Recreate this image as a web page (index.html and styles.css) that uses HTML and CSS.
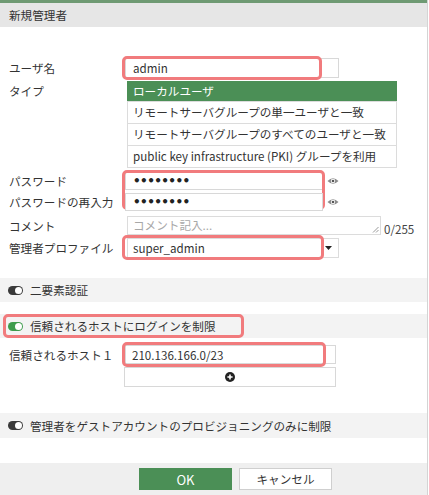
FILE: index.html
```html
<!DOCTYPE html>
<html lang="ja">
<head>
    <meta charset="UTF-8">
    <meta name="viewport" content="width=device-width, initial-scale=1.0">
    <title>新規管理者</title>
    <link rel="stylesheet" href="styles.css">
</head>
<body>
    <div class="dialog">
        <div class="titlebar">新規管理者</div>

        <div class="form">
            <div class="row row-user">
                <div class="label">ユーザ名</div>
                <div class="field">
                    <div class="input input-user">admin</div>
                    <span class="mark mark-user"></span>
                </div>
            </div>

            <div class="row row-type">
                <div class="label">タイプ</div>
                <ul class="type-list">
                    <li class="selected">ローカルユーザ</li>
                    <li>リモートサーバグループの単一ユーザと一致</li>
                    <li>リモートサーバグループのすべてのユーザと一致</li>
                    <li>public key infrastructure (PKI) グループを利用</li>
                </ul>
            </div>

            <div class="row row-pass">
                <div class="label">パスワード</div>
                <div class="field">
                    <div class="input input-pass"><span class="dots">••••••••</span></div>
                    <svg class="eye" width="12" height="8" viewBox="0 0 12 8">
                        <path d="M0.5 4 Q6 -1.5 11.5 4 Q6 9.5 0.5 4Z" fill="#8a8a8a"/>
                        <circle cx="6" cy="4" r="2.2" fill="#fff"/>
                        <circle cx="6" cy="4" r="1.3" fill="#555"/>
                    </svg>
                    <span class="mark mark-pass"></span>
                </div>
            </div>

            <div class="row row-pass2">
                <div class="label">パスワードの再入力</div>
                <div class="field">
                    <div class="input input-pass"><span class="dots">••••••••</span></div>
                    <svg class="eye" width="12" height="8" viewBox="0 0 12 8">
                        <path d="M0.5 4 Q6 -1.5 11.5 4 Q6 9.5 0.5 4Z" fill="#8a8a8a"/>
                        <circle cx="6" cy="4" r="2.2" fill="#fff"/>
                        <circle cx="6" cy="4" r="1.3" fill="#555"/>
                    </svg>
                </div>
            </div>

            <div class="row row-comment">
                <div class="label">コメント</div>
                <div class="field">
                    <div class="textarea">
                        <span class="placeholder">コメント記入...</span>
                        <svg class="grip" width="7" height="7" viewBox="0 0 7 7">
                            <path d="M1 6.5 L6.5 1 M4 6.5 L6.5 4" stroke="#999" stroke-width="1"/>
                        </svg>
                    </div>
                    <span class="counter">0/255</span>
                </div>
            </div>

            <div class="row row-profile">
                <div class="label">管理者プロファイル</div>
                <div class="field">
                    <div class="select">
                        <span>super_admin</span>
                        <svg class="caret" width="7" height="4" viewBox="0 0 7 4">
                            <path d="M0 0 L7 0 L3.5 4Z" fill="#222"/>
                        </svg>
                    </div>
                    <span class="mark mark-profile"></span>
                </div>
            </div>
        </div>

        <div class="section section-2fa">
            <span class="toggle"></span>
            <span>二要素認証</span>
        </div>

        <div class="section section-trusted">
            <span class="toggle on"></span>
            <span>信頼されるホストにログインを制限</span>
            <span class="mark mark-trusted"></span>
        </div>

        <div class="form form-hosts">
            <div class="row row-host">
                <div class="label">信頼されるホスト１</div>
                <div class="field">
                    <div class="input input-host">210.136.166.0/23</div>
                    <span class="mark mark-host"></span>
                </div>
            </div>
            <div class="row row-add">
                <div class="label"></div>
                <div class="add-box">
                    <svg width="10" height="10" viewBox="0 0 10 10">
                        <circle cx="5" cy="5" r="5" fill="#222"/>
                        <path d="M5 2.4 V7.6 M2.4 5 H7.6" stroke="#fff" stroke-width="1.6"/>
                    </svg>
                </div>
            </div>
        </div>

        <div class="section section-guest">
            <span class="toggle"></span>
            <span>管理者をゲストアカウントのプロビジョニングのみに制限</span>
        </div>

        <div class="footer">
            <button class="btn btn-ok">OK</button>
            <button class="btn btn-cancel">キャンセル</button>
        </div>
    </div>
</body>
</html>
```

FILE: styles.css
```css
body {
    margin: 0;
    font-family: "Noto Sans CJK JP", "Noto Sans", sans-serif;
    font-size: 11.6px;
    color: #333;
    background: #fff;
}

.dialog {
    width: 427px;
    height: 495px;
    border-right: 1px solid #d4d4d4;
    display: flex;
    flex-direction: column;
    overflow: hidden;
}

.titlebar {
    border-top: 3px solid #6f9a73;
    background: #e6e6e6;
    height: 24px;
    line-height: 24px;
    padding-left: 9px;
}

.form {
    padding: 31px 0 0 9px;
}

.row {
    display: flex;
    align-items: center;
}

.label {
    width: 116px;
    flex: none;
    white-space: nowrap;
}

.field {
    position: relative;
    display: flex;
    align-items: center;
}

.input {
    box-sizing: border-box;
    border: 1px solid #d8d8d8;
    padding-left: 7px;
    display: flex;
    align-items: center;
    background: #fff;
}

.mark {
    position: absolute;
    box-sizing: border-box;
    border: 3px solid #f17b7d;
    border-radius: 5px;
    pointer-events: none;
}

/* ユーザ名 */
.input-user {
    width: 214px;
    height: 20px;
}

.mark-user {
    left: -3px;
    top: -2px;
    width: 200px;
    height: 24px;
}

/* タイプ */
.row-type {
    margin-top: 3px;
    align-items: flex-start;
}

.row-type .label {
    line-height: 20px;
}

.type-list {
    list-style: none;
    margin: 0 0 0 2px;
    padding: 0;
    width: 270px;
    box-sizing: border-box;
    border: 1px solid #dcdcdc;
    border-top: none;
}

.type-list li {
    height: 21px;
    line-height: 21px;
    padding-left: 5px;
    border-top: 1px solid #dcdcdc;
    white-space: nowrap;
}

.type-list li.selected {
    height: 20px;
    line-height: 20px;
    border-top: none;
    margin: 0 -1px;
    padding-left: 6px;
    background: #4b8f56;
    color: #fff;
}

/* パスワード */
.row-pass {
    margin-top: 4px;
}

.row-pass2 {
    margin-top: 3px;
}

.input-pass {
    width: 198px;
    height: 18px;
}

.dots {
    font-family: "DejaVu Sans", sans-serif;
    font-size: 12px;
    font-weight: bold;
    letter-spacing: -0.6px;
    color: #222;
    line-height: 1;
}

.eye {
    margin-left: 4px;
}

.mark-pass {
    left: -3px;
    top: -2px;
    width: 203px;
    height: 40px;
}

/* コメント */
.row-comment {
    margin-top: 5px;
}

.textarea {
    position: relative;
    box-sizing: border-box;
    width: 254px;
    height: 19px;
    margin-left: 2px;
    border: 1px solid #dcdcdc;
    padding-left: 5px;
    line-height: 17px;
}

.placeholder {
    color: #a8a8a8;
}

.grip {
    position: absolute;
    right: 1px;
    bottom: 1px;
}

.counter {
    align-self: flex-end;
    margin-left: 3px;
    line-height: 12px;
    color: #444;
}

/* 管理者プロファイル */
.row-profile {
    margin-top: 3px;
}

.select {
    box-sizing: border-box;
    width: 212px;
    height: 20px;
    margin-left: 2px;
    border: 1px solid #dcdcdc;
    padding: 0 6px 0 5px;
    display: flex;
    align-items: center;
    justify-content: space-between;
}

.mark-profile {
    left: -3px;
    top: -3px;
    width: 202px;
    height: 25px;
}

/* トグル行 */
.section {
    position: relative;
    display: flex;
    align-items: center;
    gap: 7px;
    height: 24px;
    padding-left: 8px;
    background: #f3f3f3;
    white-space: nowrap;
}

.section-2fa {
    margin-top: 20px;
}

.section-trusted {
    margin-top: 12px;
}

.section-guest {
    margin-top: 26px;
    height: 25px;
}

.toggle {
    position: relative;
    width: 15px;
    height: 9px;
    border-radius: 5px;
    background: #3a3a3a;
    flex: none;
}

.toggle::after {
    content: "";
    position: absolute;
    right: 1px;
    top: 1px;
    width: 7px;
    height: 7px;
    border-radius: 50%;
    background: #fff;
}

.toggle.on {
    background: #3f9c4d;
}

.mark-trusted {
    left: 3px;
    top: 0;
    width: 241px;
    height: 24px;
}

/* 信頼されるホスト */
.form-hosts {
    padding-top: 7px;
}

.input-host {
    width: 211px;
    height: 19px;
    padding-left: 6px;
}

.mark-host {
    left: -3px;
    top: -3px;
    width: 204px;
    height: 25px;
}

.row-add {
    margin-top: 3px;
}

.add-box {
    box-sizing: border-box;
    width: 212px;
    height: 20px;
    margin-left: -1px;
    border: 1px solid #d8d8d8;
    display: flex;
    align-items: center;
    justify-content: center;
}

/* フッター */
.footer {
    margin-top: auto;
    height: 32px;
    background: #efefef;
    display: flex;
    gap: 7px;
    padding: 5px 0 0 139px;
    box-sizing: border-box;
}

.btn {
    width: 93px;
    height: 22px;
    font-family: inherit;
    font-size: 11.6px;
    padding: 0;
    cursor: pointer;
}

.btn-ok {
    border: none;
    background: #4b8f56;
    color: #fff;
    font-size: 13px;
}

.btn-cancel {
    border: 1px solid #cfcfcf;
    background: #fff;
    color: #333;
}
```
